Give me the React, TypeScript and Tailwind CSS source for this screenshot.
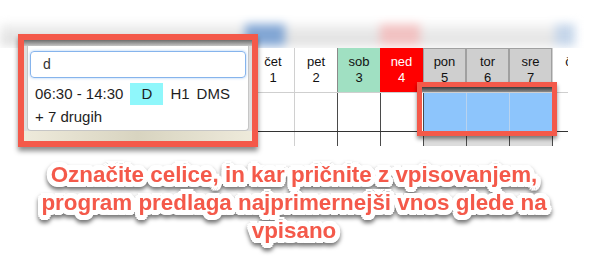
import * as React from "react";

type Day = { name: string; num: number; kind: "plain" | "sat" | "sun" | "grey" };

const days: Day[] = [
  { name: "čet", num: 1, kind: "plain" },
  { name: "pet", num: 2, kind: "plain" },
  { name: "sob", num: 3, kind: "sat" },
  { name: "ned", num: 4, kind: "sun" },
  { name: "pon", num: 5, kind: "grey" },
  { name: "tor", num: 6, kind: "grey" },
  { name: "sre", num: 7, kind: "grey" },
  { name: "čet", num: 8, kind: "plain" },
];

const headStyles: Record<Day["kind"], string> = {
  plain: "bg-white text-[#111] border-l border-[#d0d0d0]",
  sat: "bg-[#a0e0c2] text-[#111] border-l border-[#8a8a8a]",
  sun: "bg-[#ff0000] text-white",
  grey: "bg-[#cfcfcf] text-[#111] border border-[#a0a0a0]",
};

// left border of body cells, per column
const bodyLeft = [
  "border-l border-transparent",
  "border-l border-[#d0d0d0]",
  "border-l border-[#4a4a4a]",
  "border-l border-[#4a4a4a]",
  "border-l border-[#4a4a4a]",
  "border-l border-[#b9d3ee]",
  "border-l border-[#b9d3ee]",
  "border-l border-[#4a4a4a]",
];

const selected = [4, 5, 6];

function Toolbar() {
  return (
    <div className="h-12 overflow-hidden">
      <div className="mt-[24px] flex h-[22px] w-[580px] blur-[5px]">
        <div className="w-[245px] bg-gradient-to-b from-[#f0f0f0] to-[#dddddd]" />
        <div className="w-[40px] bg-[#82a6d4]" />
        <div className="w-[95px] bg-gradient-to-b from-[#f0f0f0] to-[#dddddd]" />
        <div className="w-[40px] bg-[#f2c2c2]" />
        <div className="w-[135px] bg-gradient-to-b from-[#f2f2f2] to-[#e0e0e0]" />
        <div className="w-[20px] bg-[#c6d6ea]" />
      </div>
    </div>
  );
}

function Table() {
  return (
    <div className="ml-[251px] w-[317px] overflow-hidden text-[13px] leading-4">
      <div className="flex h-[44px] w-[344px]">
        {days.map((d, i) => (
          <div
            key={i}
            className={`flex w-[43px] shrink-0 flex-col items-center justify-center ${headStyles[d.kind]}`}
          >
            <span>{d.name}</span>
            <span>{d.num}</span>
          </div>
        ))}
      </div>
      <div className="flex h-[40px] w-[344px] border-t border-b border-t-[#cfcfcf] border-b-[#333]">
        {days.map((_, i) => (
          <div
            key={i}
            className={`w-[43px] shrink-0 ${bodyLeft[i]} ${
              selected.includes(i) ? "bg-[#8dc5fc]" : "bg-white"
            }`}
          />
        ))}
      </div>
      <div className="flex h-[14px] w-[344px]">
        {days.map((_, i) => (
          <div
            key={i}
            className={`w-[43px] shrink-0 ${bodyLeft[i]} ${
              selected.includes(i) ? "border-l-[#4a4a4a] bg-[#dcdcdc]" : "bg-white"
            }`}
          />
        ))}
      </div>
    </div>
  );
}

function Popup() {
  return (
    <div className="absolute left-[18px] top-[34px] flex h-[113px] w-[240px] flex-col border-[6px] border-[#f4594a] bg-[#dedede] shadow-[0_4px_5px_rgba(0,0,0,0.45)]">
      <div className="h-[6px] bg-gradient-to-b from-[#6e6e6e] to-[#c6c6c6]" />
      <div className="mx-[3px] flex-1 rounded-b-[4px] border-x border-b border-[#c6c6c6] bg-white px-[2px] pt-[5px] text-[#1e1e1e]">
        <div className="flex h-[27px] items-center rounded-[4px] border border-[#86b4ec] pl-[12px] text-[14px] text-[#333] shadow-[0_0_3px_#a9cbf3]">
          d
        </div>
        <div className="mt-[5px] flex h-[22px] items-center pl-[5px] text-[15px]">
          <span>06:30 - 14:30</span>
          <span className="ml-[7px] flex h-[22px] w-[33px] items-center justify-center bg-[#8ff7fb]">
            D
          </span>
          <span className="ml-[7px]">H1</span>
          <span className="ml-[7px]">DMS</span>
        </div>
        <div className="mt-[1px] pl-[5px] text-[15px] leading-[22px]">+ 7 drugih</div>
      </div>
      <div className="h-[10px] bg-gradient-to-r from-[#eeeadb] via-[#d8d4c0] to-[#eeeadb]" />
    </div>
  );
}

function SelectionFrame() {
  return (
    <div className="absolute left-[417px] top-[82px] h-[54px] w-[140px] border-[5px] border-[#f4594a] shadow-[0_3px_4px_rgba(0,0,0,0.45)]">
      <div className="h-[5px] bg-gradient-to-b from-[#3c3c3c] to-[#8d8d8d]" />
    </div>
  );
}

const outline =
  "[text-shadow:5px_0_0_#fff,4.6px_1.9px_0_#fff,3.5px_3.5px_0_#fff,1.9px_4.6px_0_#fff,0_5px_0_#fff,-1.9px_4.6px_0_#fff,-3.5px_3.5px_0_#fff,-4.6px_1.9px_0_#fff,-5px_0_0_#fff,-4.6px_-1.9px_0_#fff,-3.5px_-3.5px_0_#fff,-1.9px_-4.6px_0_#fff,0_-5px_0_#fff,1.9px_-4.6px_0_#fff,3.5px_-3.5px_0_#fff,4.6px_-1.9px_0_#fff,2.5px_0_0_#fff,0_2.5px_0_#fff,-2.5px_0_0_#fff,0_-2.5px_0_#fff,1.8px_1.8px_0_#fff,-1.8px_1.8px_0_#fff,1.8px_-1.8px_0_#fff,-1.8px_-1.8px_0_#fff]";

function Caption() {
  return (
    <div
      className={`mt-[15px] w-[588px] text-center text-[22.4px] font-bold leading-[28px] text-[#f4594a] drop-shadow-[0_3px_2px_rgba(0,0,0,0.55)] ${outline}`}
    >
      <div>Označite celice, in kar pričnite z vpisovanjem,</div>
      <div>program predlaga najprimernejši vnos glede na</div>
      <div>vpisano</div>
    </div>
  );
}

export default function App() {
  return (
    <div className="relative h-[256px] w-[608px] overflow-hidden bg-white font-['Liberation_Sans',Arial,sans-serif]">
      <Toolbar />
      <Table />
      <Caption />
      <Popup />
      <SelectionFrame />
    </div>
  );
}
